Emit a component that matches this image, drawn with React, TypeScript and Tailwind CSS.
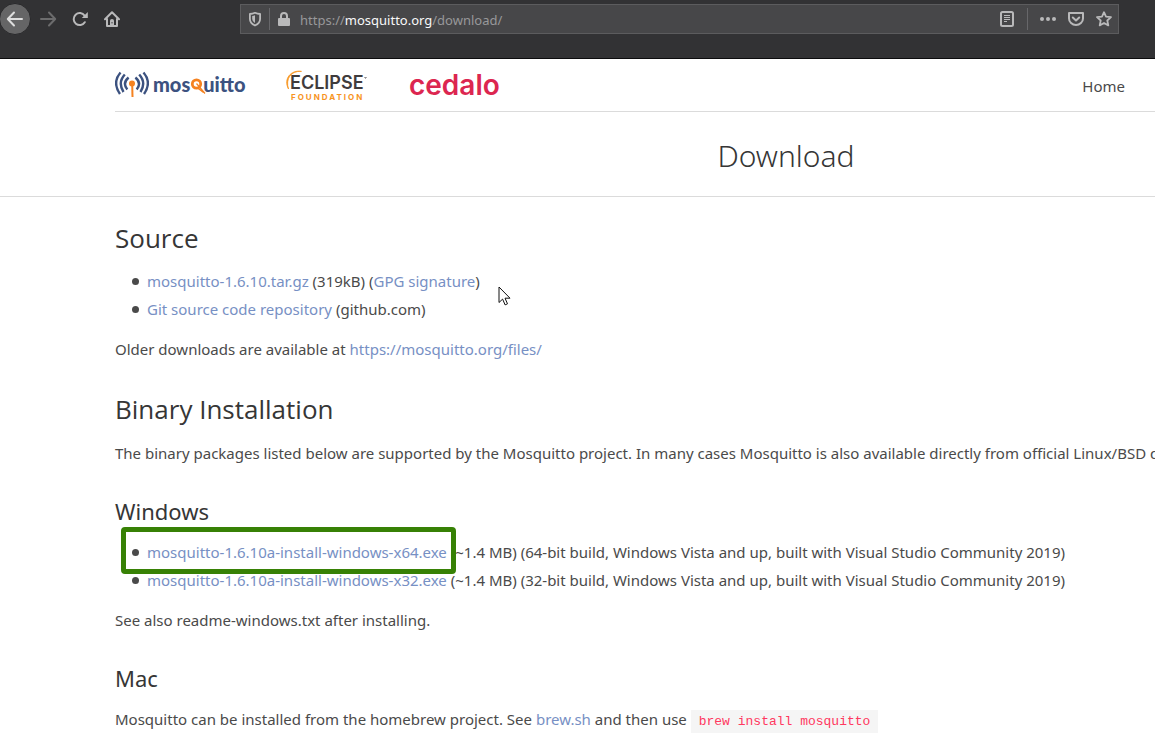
import type { ReactNode } from "react";

function BrowserBar() {
  return (
    <header className="flex h-[59px] items-start border-b border-[#0c0c0d] bg-[#323234] text-[#b9b9ba]">
      <nav className="flex w-60 shrink-0 items-center pt-[3px]" aria-label="Browser">
        <button aria-label="Back" className="-ml-px flex size-8 items-center justify-center rounded-full border border-[#29292b] bg-[#656566] text-[#dedede]">
          <svg width="18" height="16" viewBox="0 0 18 16" fill="none" stroke="currentColor" strokeWidth="2" strokeLinecap="round" strokeLinejoin="round">
            <path d="M16 8H2M8 1.5 1.8 8 8 14.5" />
          </svg>
        </button>
        <button aria-label="Forward" className="ml-2 flex h-8 w-[18px] items-center text-[#6c6c6d]">
          <svg width="18" height="16" viewBox="0 0 18 16" fill="none" stroke="currentColor" strokeWidth="2" strokeLinecap="round" strokeLinejoin="round">
            <path d="M2 8h14M10 1.5 16.2 8 10 14.5" />
          </svg>
        </button>
        <button aria-label="Reload" className="ml-[15px] flex h-8 w-4 items-center">
          <svg width="16" height="16" viewBox="0 0 16 16" fill="none" stroke="currentColor" strokeWidth="2">
            <path d="M12.8 11.2A6 6 0 1 1 12.6 4.6" strokeLinecap="round" />
            <path d="M15.8 1v6h-6z" fill="currentColor" stroke="none" />
          </svg>
        </button>
        <button aria-label="Home page" className="ml-4 flex h-8 w-4 items-center">
          <svg width="16" height="16" viewBox="0 0 16 16" fill="none" stroke="currentColor" strokeWidth="2" strokeLinecap="round" strokeLinejoin="round">
            <path d="M1 8.2 8 1.2l7 7M3 8v7h10V8" />
            <path d="M6 15V9.500Q6 8 8 8t2 1.500V15z" fill="currentColor" stroke="none" />
            <path d="M8 11.500v.5" stroke="#323234" strokeWidth="1" />
          </svg>
        </button>
      </nav>
      <div className="mt-1 mr-9 flex h-[30px] min-w-0 flex-1 items-center border border-[#5c5c5e] bg-[#474749]">
        <button aria-label="Tracking protection" className="ml-[7px] flex">
          <svg width="14" height="16" viewBox="0 0 14 16">
            <path d="M7 1.800Q4.500 3 1.900 3v5q0 4.200 5.100 6.500Q12.100 12.200 12.100 8V3Q9.500 3 7 1.800z" fill="none" stroke="currentColor" strokeWidth="1.800" strokeLinejoin="round" />
            <path d="M7 4.200v7.900Q4.200 10.500 4.200 8V4.900Q5.800 4.800 7 4.200z" fill="currentColor" />
          </svg>
        </button>
        <span className="mr-2 ml-[7px] h-[22px] w-px bg-[#67676a]" />
        <svg width="12" height="14" viewBox="0 0 12 14" aria-hidden="true">
          <rect x="0" y="6" width="12" height="8" rx="1" fill="currentColor" />
          <path d="M3 7V4a3 3 0 0 1 6 0v3" fill="none" stroke="currentColor" strokeWidth="2" />
        </svg>
        <div className="ml-[10px] flex-1 truncate pt-px text-[13px] leading-5 text-[#98989a]">
          https://<span className="text-[#f9f9fa]">mosquitto.org</span>/download/
        </div>
        <button aria-label="Reader view" className="flex">
          <svg width="16" height="16" viewBox="0 0 16 16" fill="none" stroke="currentColor">
            <rect x="2" y="1" width="12" height="14" rx="1.500" strokeWidth="2" />
            <path d="M5 4.500h6M5 6.500h6M5 8.500h6M5 10.500h3" strokeWidth="1" />
          </svg>
        </button>
        <span className="mx-3 h-[22px] w-px bg-[#67676a]" />
        <button aria-label="Page actions" className="flex">
          <svg width="16" height="16" viewBox="0 0 16 16" fill="currentColor">
            <circle cx="2" cy="8" r="2" />
            <circle cx="8" cy="8" r="2" />
            <circle cx="14" cy="8" r="2" />
          </svg>
        </button>
        <button aria-label="Save to Pocket" className="ml-3 flex">
          <svg width="16" height="16" viewBox="0 0 16 16" fill="none" stroke="currentColor" strokeWidth="2" strokeLinecap="round" strokeLinejoin="round">
            <path d="M1 2h14v5.500a7 6.500 0 0 1-14 0z" />
            <path d="M4.800 6.500 8 9.500l3.200-3" />
          </svg>
        </button>
        <button aria-label="Bookmark" className="mr-1.5 ml-3 flex">
          <svg width="16" height="16" viewBox="0 0 16 16" fill="none" stroke="currentColor" strokeWidth="1.800" strokeLinejoin="round">
            <path d="m8 1.200 2 4.500 5 .5-3.700 3.300 1 4.900L8 12l-4.300 2.400 1-4.900L1 6.200l5-.5z" />
          </svg>
        </button>
      </div>
    </header>
  );
}

function MosquittoLogo() {
  return (
    <a href="#mosquitto" aria-label="mosquitto" className="flex h-8 w-[132px] items-center text-[#3c5280]">
      <svg width="34" height="28" viewBox="0 0 34 28" fill="none" stroke="currentColor" strokeWidth="2.400" className="shrink-0">
        <path d="M5.500 1.500Q-3 11.500 5 23M9.800 3.500Q2.500 11.500 8.500 21M13.600 6.500Q7 12 12.300 18.500" />
        <path d="M28.500 1.500Q37 11.500 29 23M24.200 3.500Q31.500 11.500 25.500 21M20.400 6.500Q27 12 21.700 18.500" />
        <circle cx="17" cy="12.500" r="3" fill="#f58220" stroke="none" />
        <path d="M16.200 13h2l.3 13h-2z" fill="#f58220" stroke="none" />
      </svg>
      <span className="ml-1 flex items-center pb-[3px] font-[Lato] text-[20px] leading-6 font-black">
        mos
        <svg width="13" height="20" viewBox="0 0 13 20" className="mt-[7px] overflow-visible" aria-hidden="true">
          <circle cx="6.500" cy="7" r="4.200" fill="none" stroke="#f58220" strokeWidth="2.800" />
          <path d="m6.500 6.500 8.500 10M7 10.500l6.500 5" stroke="#f58220" strokeWidth="1.200" />
        </svg>
        uitto
      </span>
    </a>
  );
}

function EclipseLogo() {
  return (
    <a href="#eclipse" className="relative ml-[38px] block h-8 w-[88px]">
      <svg width="20" height="24" viewBox="0 0 20 24" className="absolute top-0 left-0" aria-hidden="true">
        <path d="M16.500 2.400C6 .5-2 10 3.500 20 .2 10 6 1.500 16.500 2.400z" fill="#f7941e" stroke="#f7941e" strokeWidth=".8" />
      </svg>
      <span className="flex pt-1 pl-[5px] font-[Inter] text-[18px] leading-5 font-semibold text-[#3f3b3c]">
        ECLIPSE
        <svg width="3" height="3" viewBox="0 0 3 3" className="mt-1" aria-hidden="true">
          <path d="M0 .5h3M1.500 0v2" stroke="#8a8788" strokeWidth=".7" />
        </svg>
      </span>
      <span className="block pl-[6px] font-[Inter] text-[8px] leading-[8px] font-bold tracking-[2px] text-[#f7941e]">FOUNDATION</span>
    </a>
  );
}

function Heading({ children }: { children: ReactNode }) {
  return <h2 className="font-['Open_Sans',sans-serif] text-[26px] leading-8 text-[#363636]">{children}</h2>;
}

function SubHeading({ children }: { children: ReactNode }) {
  return <h3 className="mt-8 text-[22px] leading-7 text-[#363636]">{children}</h3>;
}

function Link({ children }: { children: ReactNode }) {
  return (
    <a href="#download" className="text-[#7790c4]">
      {children}
    </a>
  );
}

function Item({ children }: { children: ReactNode }) {
  return (
    <li className="relative before:absolute before:top-[9px] before:-left-[15px] before:size-[7px] before:rounded-full before:bg-[#4a4a4a] before:content-['']">
      {children}
    </li>
  );
}

function Cursor() {
  return (
    <svg width="13" height="20" viewBox="0 0 13 20" className="absolute top-[286px] left-[498px]" aria-hidden="true">
      <path d="M1 1v15.500l3.600-3.400 2.500 5.800 2.400-1.100L7 12.200h5z" fill="#fff" stroke="#111" strokeWidth="1" />
    </svg>
  );
}

export default function App() {
  return (
    <div className="relative min-h-screen overflow-hidden bg-white font-['Noto_Sans','Open_Sans',sans-serif] text-[15px] leading-6 text-[#4a4a4a]">
      <BrowserBar />
      <div className="ml-[115px] flex h-[53px] items-center border-b border-[#dbdbdb] pr-[30px]">
        <MosquittoLogo />
        <EclipseLogo />
        <a href="#cedalo" className="ml-9 font-[Inter] text-[28px] leading-8 font-semibold text-[#dc2650]">
          cedalo
        </a>
        <a href="#home" className="mt-px ml-auto">
          Home
        </a>
      </div>
      <div className="flex h-[85px] items-center justify-center border-b border-[#dbdbdb] pt-1 pl-[417px]">
        <h1 className="text-[30px] leading-10 font-light text-[#363636]">Download</h1>
      </div>
      <main className="pt-[25px] pb-4 pl-[115px] whitespace-nowrap">
        <Heading>Source</Heading>
        <ul className="mt-[15px] ml-8 space-y-1">
          <Item>
            <Link>mosquitto-1.6.10.tar.gz</Link> (319kB) (<Link>GPG signature</Link>)
          </Item>
          <Item>
            <Link>Git source code repository</Link> (github.com)
          </Item>
        </ul>
        <p className="mt-4 mb-8">
          Older downloads are available at <Link>https://mosquitto.org/files/</Link>
        </p>
        <Heading>Binary Installation</Heading>
        <p className="mt-4">
          The binary packages listed below are supported by the Mosquitto project. In many cases Mosquitto is also available directly from official Linux/BSD distributions.
        </p>
        <SubHeading>Windows</SubHeading>
        <ul className="mt-[15px] ml-8 space-y-1">
          <Item>
            <Link>mosquitto-1.6.10a-install-windows-x64.exe</Link> (~1.4 MB) (64-bit build, Windows Vista and up, built with Visual Studio Community 2019)
            <span className="absolute -top-[13px] -left-[26px] h-[47px] w-[335px] rounded border-[5px] border-[#378105]" />
          </Item>
          <Item>
            <Link>mosquitto-1.6.10a-install-windows-x32.exe</Link> (~1.4 MB) (32-bit build, Windows Vista and up, built with Visual Studio Community 2019)
          </Item>
        </ul>
        <p className="mt-4">See also readme-windows.txt after installing.</p>
        <SubHeading>Mac</SubHeading>
        <p className="mt-[15px]">
          Mosquitto can be installed from the homebrew project. See <Link>brew.sh</Link> and then use{" "}
          <code className="bg-[#f5f5f5] px-2 py-1 font-['Liberation_Mono',monospace] text-[13px] text-[#ff3860]">brew install mosquitto</code>
        </p>
      </main>
      <Cursor />
    </div>
  );
}
